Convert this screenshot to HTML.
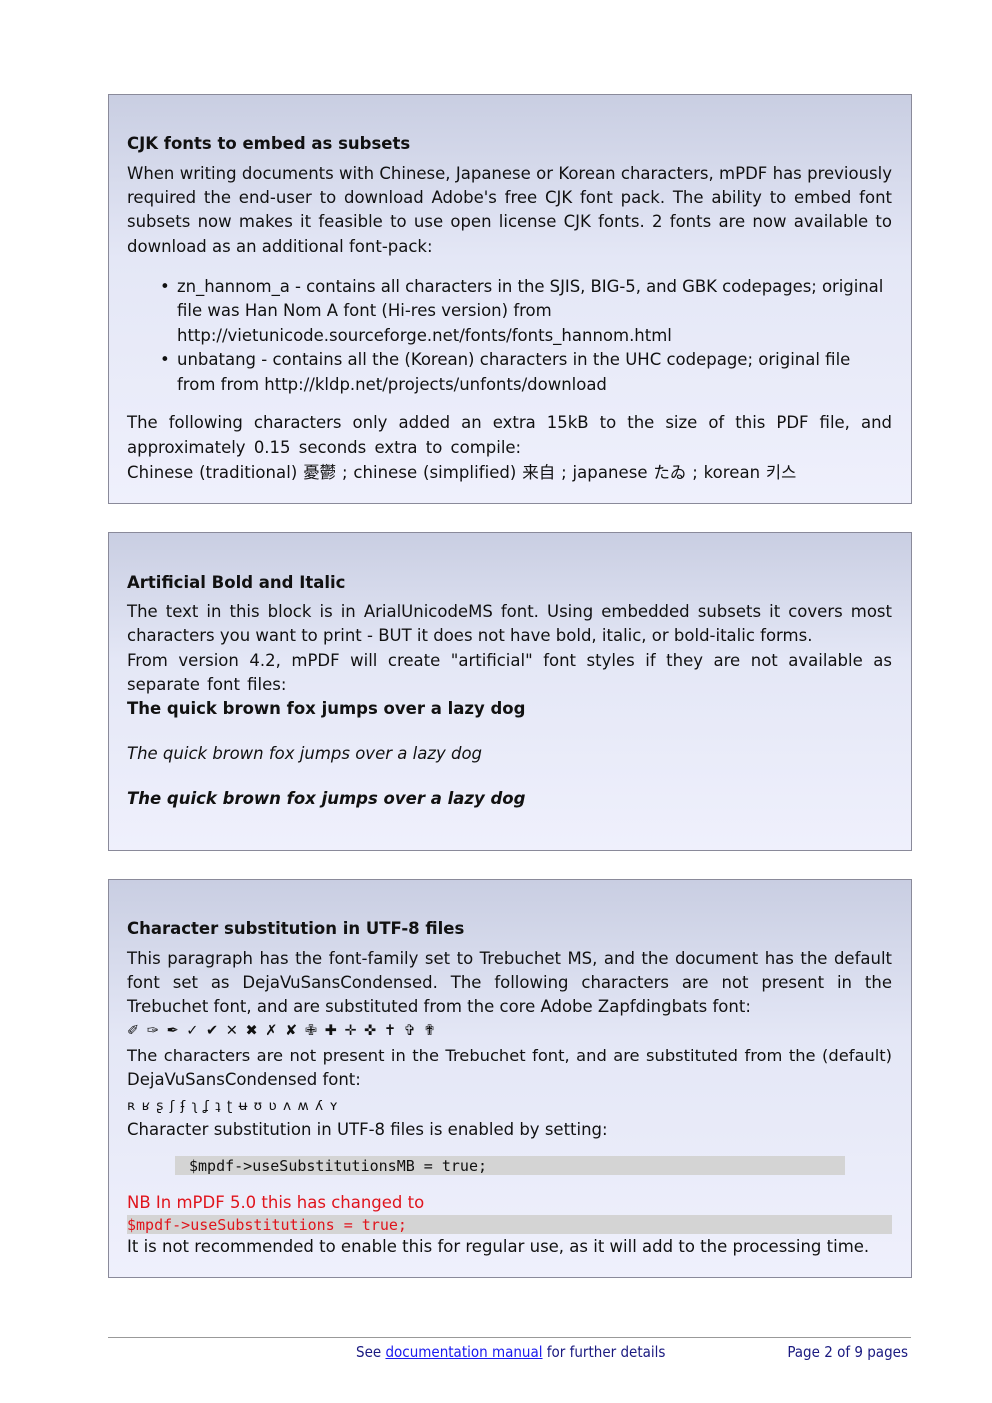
<!DOCTYPE html>
<html><head><meta charset="utf-8"><style>
body{margin:0;width:992px;height:1403px;background:#fff;position:relative;font-family:"DejaVu Sans","Noto Sans CJK SC",sans-serif;font-size:16.5px;color:#111;overflow:hidden}
.box{position:absolute;left:108px;width:802px;border:1px solid #8a8a9a;background:linear-gradient(#c9cee2,#e4e7f6 40%,#eff0fc)}
.l{position:absolute;left:127px;width:765px;line-height:24px;white-space:nowrap;height:24px;margin-top:1px}
.j{text-align:justify;text-align-last:justify;white-space:normal}
.c{font-family:"DejaVu Sans Condensed","DejaVu Sans","Noto Sans CJK SC",sans-serif}
b{font-weight:bold}
.m{font-family:"DejaVu Sans Mono",monospace;font-size:15px}
</style></head><body>
<div class="box" style="top:94px;height:408px"></div>
<div class="l" style="top:131px"><b>CJK fonts to embed as subsets</b></div>
<div class="l j" style="top:161px">When writing documents with Chinese, Japanese or Korean characters, mPDF has previously</div>
<div class="l j" style="top:185px">required the end-user to download Adobe's free CJK font pack. The ability to embed font</div>
<div class="l j" style="top:209px">subsets now makes it feasible to use open license CJK fonts. 2 fonts are now available to</div>
<div class="l" style="top:234px">download as an additional font-pack:</div>
<div class="l" style="top:274px;left:160px">•</div>
<div class="l" style="top:274px;left:177px;letter-spacing:-0.05px">zn_hannom_a - contains all characters in the SJIS, BIG-5, and GBK codepages; original</div>
<div class="l" style="top:298px;left:177px">file was Han Nom A font (Hi-res version) from</div>
<div class="l" style="top:323px;left:177px">http://vietunicode.sourceforge.net/fonts/fonts_hannom.html</div>
<div class="l" style="top:347px;left:160px">•</div>
<div class="l" style="top:347px;left:177px">unbatang - contains all the (Korean) characters in the UHC codepage; original file</div>
<div class="l" style="top:372px;left:177px">from from http://kldp.net/projects/unfonts/download</div>
<div class="l j" style="top:410px">The following characters only added an extra 15kB to the size of this PDF file, and</div>
<div class="l" style="top:435px;word-spacing:3px">approximately 0.15 seconds extra to compile:</div>
<div class="l" style="top:460px;word-spacing:0.5px;letter-spacing:0.05px">Chinese (traditional) 憂鬱 ; chinese (simplified) 来自 ; japanese たゐ ; korean 키스</div>

<div class="box" style="top:532px;height:317px"></div>
<div class="l" style="top:570px"><b>Artificial Bold and Italic</b></div>
<div class="l j" style="top:599px">The text in this block is in ArialUnicodeMS font. Using embedded subsets it covers most</div>
<div class="l" style="top:623px">characters you want to print - BUT it does not have bold, italic, or bold-italic forms.</div>
<div class="l j" style="top:648px">From version 4.2, mPDF will create "artificial" font styles if they are not available as</div>
<div class="l" style="top:672px;word-spacing:2px">separate font files:</div>
<div class="l" style="top:696px"><b>The quick brown fox jumps over a lazy dog</b></div>
<div class="l" style="top:741px"><i>The quick brown fox jumps over a lazy dog</i></div>
<div class="l" style="top:786px"><b><i>The quick brown fox jumps over a lazy dog</i></b></div>

<div class="box" style="top:879px;height:397px"></div>
<div class="l" style="top:916px"><b>Character substitution in UTF-8 files</b></div>
<div class="l j" style="top:946px">This paragraph has the font-family set to Trebuchet MS, and the document has the default</div>
<div class="l j" style="top:970px">font set as DejaVuSansCondensed. The following characters are not present in the</div>
<div class="l" style="top:994px">Trebuchet font, and are substituted from the core Adobe Zapfdingbats font:</div>
<div class="l" style="top:1018px;font-size:14.5px;word-spacing:3px">✐ ✑ ✒ ✓ ✔ ✕ ✖ ✗ ✘ ✙ ✚ ✛ ✜ ✝ ✞ ✟</div>
<div class="l j" style="top:1043px;font-size:16.3px">The characters are not present in the Trebuchet font, and are substituted from the (default)</div>
<div class="l" style="top:1067px">DejaVuSansCondensed font:</div>
<div class="l" style="top:1093px;font-size:13.7px;word-spacing:2px">ʀ ʁ ʂ ʃ ʄ ʅ ʆ ʇ ʈ ʉ ʊ ʋ ʌ ʍ ʎ ʏ</div>
<div class="l" style="top:1117px">Character substitution in UTF-8 files is enabled by setting:</div>
<div style="position:absolute;left:175px;top:1156px;width:670px;height:19px;background:#d4d4d4"></div>
<div class="l m" style="top:1153px;left:189px">$mpdf-&gt;useSubstitutionsMB = true;</div>
<div class="l" style="top:1190px;color:#e0141c">NB In mPDF 5.0 this has changed to</div>
<div style="position:absolute;left:127px;top:1215px;width:765px;height:19px;background:#d4d4d4"></div>
<div class="l m" style="top:1212px;color:#e0141c">$mpdf-&gt;useSubstitutions = true;</div>
<div class="l" style="top:1234px;font-size:16.5px">It is not recommended to enable this for regular use, as it will add to the processing time.</div>

<div style="position:absolute;left:108px;top:1337px;width:803px;height:1px;background:#999"></div>
<div class="l c" style="top:1339px;left:356px;font-size:15px;color:#1a1a80">See <span style="color:#1a1aee;text-decoration:underline">documentation manual</span> for further details</div>
<div class="l c" style="top:1339px;left:700px;width:208px;text-align:right;font-size:15px;color:#1a1a80">Page 2 of 9 pages</div>
</body></html>
